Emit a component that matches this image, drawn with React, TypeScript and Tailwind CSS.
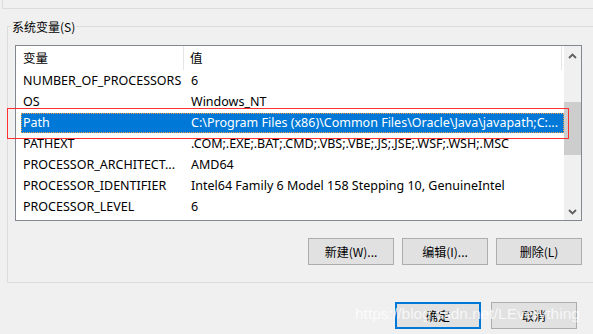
import React from "react";

const rows = [
  { name: "NUMBER_OF_PROCESSORS", value: "6" },
  { name: "OS", value: "Windows_NT" },
  { name: "Path", value: "C:\\Program Files (x86)\\Common Files\\Oracle\\Java\\javapath;C:...", selected: true },
  { name: "PATHEXT", value: ".COM;.EXE;.BAT;.CMD;.VBS;.VBE;.JS;.JSE;.WSF;.WSH;.MSC" },
  { name: "PROCESSOR_ARCHITECT...", value: "AMD64" },
  { name: "PROCESSOR_IDENTIFIER", value: "Intel64 Family 6 Model 158 Stepping 10, GenuineIntel" },
  { name: "PROCESSOR_LEVEL", value: "6" },
];

function Chevron({ up }: { up?: boolean }) {
  return (
    <svg width="9" height="6" viewBox="0 0 9 6">
      <polyline
        points={up ? "1,5 4.5,1.5 8,5" : "1,1 4.5,4.5 8,1"}
        fill="none"
        stroke="#606060"
        strokeWidth="1.8"
      />
    </svg>
  );
}

function Btn({ label, primary }: { label: string; primary?: boolean }) {
  return (
    <div
      className={`w-[86px] h-[27px] flex items-center justify-center bg-[#e1e1e1] text-[12px] text-black ${
        primary ? "border-2 border-[#0078d7]" : "border border-[#adadad]"
      }`}
    >
      {label}
    </div>
  );
}

export default function App() {
  return (
    <div className="relative w-[593px] h-[334px] overflow-hidden bg-[#f0f0f0] flex flex-col font-['Noto_Sans','Noto_Sans_CJK_SC',sans-serif] text-[12px] text-black">
      {/* previous group box, bottom edge */}
      <div className="h-[9px] ml-[2px] border-l border-b border-[#dcdcdc] shrink-0" />

      {/* 系统变量 group box */}
      <div className="relative mt-[17px] ml-[7px] h-[257px] border-l border-t border-b border-[#dcdcdc] shrink-0">
        <span className="absolute left-[3px] top-[-8px] px-[1px] leading-[16px] bg-[#f0f0f0] font-['Noto_Sans_CJK_SC',sans-serif]">
          系统变量(S)
        </span>

        <div className="w-[567px] ml-[7px] mt-[18px]">
          {/* list view */}
          <div className="h-[176px] border border-[#828790] bg-white flex text-[12.5px]">
            <div className="flex-1 flex flex-col">
              <div className="h-[24px] flex shrink-0">
                <div className="w-[168px] pl-[7px] flex items-center border-r border-[#e5e5e5] font-['Noto_Sans_CJK_SC',sans-serif]">
                  变量
                </div>
                <div className="w-[378px] pl-[6px] flex items-center border-r border-[#e5e5e5] font-['Noto_Sans_CJK_SC',sans-serif]">
                  值
                </div>
              </div>
              {rows.map((r) => (
                <div key={r.name} className="h-[21px] pt-[1px] ml-[5px] shrink-0">
                  <div
                    className={`h-[20px] flex items-center whitespace-nowrap ${
                      r.selected
                        ? "bg-[#0078d7] text-white outline-1 outline-dotted outline-[#e9a04a] -outline-offset-1"
                        : ""
                    }`}
                  >
                    <div className="w-[163px] pl-[2px] overflow-hidden">{r.name}</div>
                    <div className="flex-1 pl-[7px] overflow-hidden">{r.value}</div>
                  </div>
                </div>
              ))}
            </div>

            {/* scroll bar */}
            <div className="w-[17px] bg-[#f0f0f0] flex flex-col">
              <div className="h-[20px] flex items-center justify-center">
                <Chevron up />
              </div>
              <div className="h-[36px]" />
              <div className="h-[53px] bg-[#cdcdcd]" />
              <div className="flex-1" />
              <div className="h-[17px] flex items-center justify-center">
                <Chevron />
              </div>
            </div>
          </div>

          <div className="mt-[17px] flex justify-end gap-[8px] font-['Noto_Sans_CJK_SC',sans-serif]">
            <Btn label="新建(W)..." />
            <Btn label="编辑(I)..." />
            <Btn label="删除(L)" />
          </div>
        </div>
      </div>

      {/* dialog buttons */}
      <div className="mt-[19px] pr-[16px] flex justify-end gap-[10px] font-['Noto_Sans_CJK_SC',sans-serif]">
        <Btn label="确定" primary />
        <Btn label="取消" />
      </div>

      {/* red highlight around Path */}
      <div className="absolute left-[7px] top-[108px] w-[562px] h-[31px] border border-[#ff3030]" />

      {/* watermark */}
      <div className="absolute left-[355px] top-[304px] text-[15.5px] leading-[20px] text-white/75 font-['Liberation_Sans',sans-serif] whitespace-nowrap">
        https://blog.csdn.net/LEverything
      </div>
    </div>
  );
}
